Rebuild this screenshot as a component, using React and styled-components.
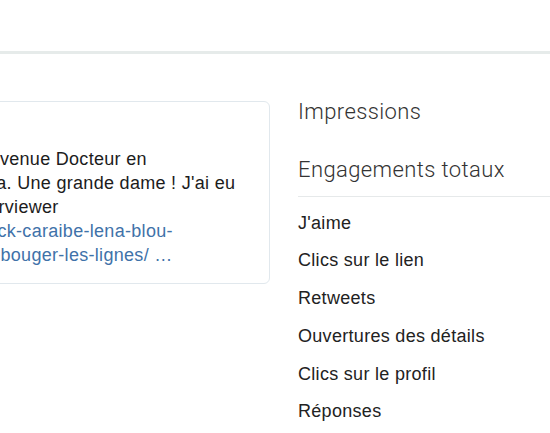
import React from 'react';
import styled, { createGlobalStyle } from 'styled-components';

const GlobalStyle = createGlobalStyle`
  html, body {
    margin: 0;
    padding: 0;
    background: #ffffff;
    overflow: hidden;
  }
  body {
    font-family: "Liberation Sans", Arial, Helvetica, sans-serif;
    color: #222222;
  }
`;

// PAGE
const Page = styled.div`
  width: 550px;
  height: 433px;
  overflow: hidden;
  background: #ffffff;
`;

const TopBar = styled.header`
  height: 51px;
  border-bottom: 3px solid #e6ebea;
`;

const Main = styled.main`
  display: flex;
  align-items: flex-start;
  gap: 28px;
  padding-top: 22.5px;
`;

// TWEET CARD
const TweetCard = styled.article`
  flex: 0 0 431px;
  box-sizing: border-box;
  margin-top: 24.5px;
  margin-left: -161px;
  padding: 45px 20px 16px;
  border: 1px solid #e1e8ed;
  border-radius: 6px;
`;

const TweetText = styled.p`
  margin: 0;
  font-size: 18px;
  line-height: 24px;
  letter-spacing: 0.3px;
  color: #1c1c1c;
`;

const TweetLine = styled.span`
  display: block;
  white-space: nowrap;
  color: ${({ link }) => (link ? '#3f72a9' : 'inherit')};
`;

// STATS
const Stats = styled.section`
  flex: 1;
  min-width: 0;
`;

const StatHeader = styled.h3`
  margin: 0;
  padding: ${({ divided }) => (divided ? '22.5px 0 16px' : '24.5px 0 14px')};
  font-family: Roboto, "Liberation Sans", Arial, sans-serif;
  font-size: 22px;
  font-weight: 300;
  line-height: 21px;
  letter-spacing: 0.4px;
  color: #333333;
  border-bottom: ${({ divided }) => (divided ? '1px solid #e6e9ea' : 'none')};
`;

const StatList = styled.ul`
  list-style: none;
  margin: 0;
  padding: 8px 0 0;
`;

const StatItem = styled.li`
  font-size: 18px;
  line-height: 37.8px;
  letter-spacing: 0.3px;
  color: #222222;
  white-space: nowrap;
`;

const tweetLines = [
  { text: 'Léna Blou est devenue Docteur en' },
  { text: 'danse au Canada. Une grande dame ! J\'ai eu' },
  { text: 'le plaisir de l\'interviewer' },
  { text: 'rci.fm/culture/black-caraibe-lena-blou-', link: true },
  { text: 'la-danse-qui-fait-bouger-les-lignes/ …', link: true },
];

const engagements = [
  "J'aime",
  'Clics sur le lien',
  'Retweets',
  'Ouvertures des détails',
  'Clics sur le profil',
  'Réponses',
];

export default function App() {
  return (
    <Page>
      <GlobalStyle />
      <TopBar />
      <Main>
        <TweetCard>
          <TweetText>
            {tweetLines.map((line) => (
              <TweetLine key={line.text} link={line.link}>
                {line.text}
              </TweetLine>
            ))}
          </TweetText>
        </TweetCard>
        <Stats>
          <StatHeader>Impressions</StatHeader>
          <StatHeader divided>Engagements totaux</StatHeader>
          <StatList>
            {engagements.map((label) => (
              <StatItem key={label}>{label}</StatItem>
            ))}
          </StatList>
        </Stats>
      </Main>
    </Page>
  );
}
